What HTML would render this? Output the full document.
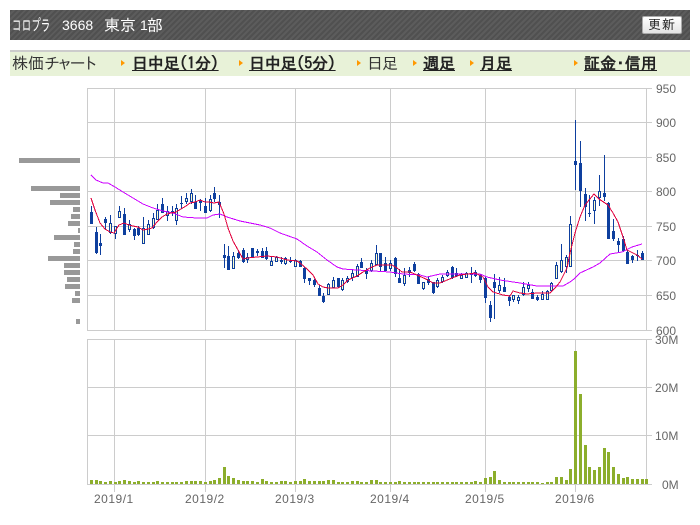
<!DOCTYPE html>
<html lang="ja">
<head>
<meta charset="utf-8">
<title>コロプラ 3668</title>
<style>
html,body{margin:0;padding:0;background:#fff;width:700px;height:525px;overflow:hidden}
body{position:relative;font-family:"Liberation Sans","IPAGothic","Noto Sans CJK JP",sans-serif;color:#333}
.abs{position:absolute;white-space:nowrap}
#hd{left:10px;top:10px;width:680px;height:30px;background:repeating-linear-gradient(135deg,#505050 0,#505050 2px,#5c5c5c 2px,#5c5c5c 4px)}
.w{position:absolute;color:#fff;white-space:nowrap;font-family:"IPAGothic","Liberation Sans",sans-serif;line-height:20px;top:15px}
#btn{left:642px;top:16px;width:38px;height:16px;border:1px solid #aaa;border-radius:2px;background:linear-gradient(#fff,#e4e4e4);color:#222;font-size:13px;line-height:16px;text-align:center;font-family:"IPAGothic",sans-serif;letter-spacing:1px}
#nav{left:10px;top:50px;width:680px;height:24px;border-top:2px solid #ccc;background:#e8f2d8}
.t{position:absolute;top:52px;line-height:22px;font-size:16px;font-family:"IPAGothic","Noto Sans CJK JP",sans-serif;color:#333;white-space:nowrap}
.b{font-weight:bold;text-decoration:underline;color:#222}
.ar{position:absolute;top:60px;width:0;height:0;border-left:4px solid #f90;border-top:3px solid transparent;border-bottom:3px solid transparent}
svg{position:absolute;left:0;top:0}
svg text{font-family:"Liberation Sans",sans-serif;font-size:12px;fill:#666}
</style>
</head>
<body>
<div class="abs" id="hd"></div>
<span class="w" style="left:12px;font-size:16px;transform:scaleX(.6);transform-origin:0 50%">コロプラ</span>
<span class="w" style="left:62px;font-size:14px;font-family:'Liberation Sans',sans-serif">3668</span>
<span class="w" style="left:104px;font-size:16px">東京</span>
<span class="w" style="left:140px;font-size:14px;font-family:'Liberation Sans',sans-serif">1</span>
<span class="w" style="left:147px;font-size:16px">部</span>
<div class="abs" id="btn">更新</div>
<div class="abs" id="nav"></div>
<span class="t" style="left:12px">株価</span><span class="t" style="left:44px;letter-spacing:-3.2px">チャート</span>
<i class="ar" style="left:121px"></i><span class="t b" style="left:132px;letter-spacing:-.2px">日中足(1分)</span>
<i class="ar" style="left:239px"></i><span class="t b" style="left:249px;letter-spacing:-.2px">日中足(5分)</span>
<i class="ar" style="left:357px"></i><span class="t" style="left:367px;letter-spacing:-1px">日足</span>
<i class="ar" style="left:413px"></i><span class="t b" style="left:423px">週足</span>
<i class="ar" style="left:470px"></i><span class="t b" style="left:480px">月足</span>
<i class="ar" style="left:574px"></i><span class="t b" style="left:584px;letter-spacing:.2px">証金･信用</span>
<svg id="c" width="700" height="525" viewBox="0 0 700 525" xmlns="http://www.w3.org/2000/svg">
<g id="g" shape-rendering="crispEdges"></g>
<g id="lp" fill="#999" shape-rendering="crispEdges"></g>
<g id="vol" fill="#8cae2c" shape-rendering="crispEdges"></g>
<g id="cd" shape-rendering="crispEdges"></g>
<polyline id="pk" fill="none" stroke="#cc00ff" stroke-width="1" shape-rendering="crispEdges"/>
<polyline id="rd" fill="none" stroke="#e0003c" stroke-width="1" shape-rendering="crispEdges"/>
<text x="656" y="93">950</text>
<text x="656" y="127">900</text>
<text x="656" y="162">850</text>
<text x="656" y="196">800</text>
<text x="656" y="231">750</text>
<text x="656" y="265">700</text>
<text x="656" y="300">650</text>
<text x="656" y="335">600</text>
<text x="655" y="344">30M</text>
<text x="655" y="392">20M</text>
<text x="655" y="440">10M</text>
<text x="662" y="489">0M</text>
<text x="94" y="503" letter-spacing=".5">2019/1</text>
<text x="185" y="503" letter-spacing=".5">2019/2</text>
<text x="275" y="503" letter-spacing=".5">2019/3</text>
<text x="370" y="503" letter-spacing=".5">2019/4</text>
<text x="465" y="503" letter-spacing=".5">2019/5</text>
<text x="555" y="503" letter-spacing=".5">2019/6</text>
</svg>
<script>
(function(){
var r=function(x,y,w,h,f){return '<rect x="'+x+'" y="'+y+'" width="'+w+'" height="'+h+'"'+(f?' fill="'+f+'"':'')+'/>'};
var G='#ccc',s='';
[88,122,157,191,226,260,295,330].forEach(function(y){s+=r(87,y,565,1,G)});
[339,387,435,484].forEach(function(y){s+=r(87,y,565,1,G)});
[87,114,205,295,390,485,575,646].forEach(function(x){s+=r(x,88,1,243,G);
 var long=(x!=87&&x!=646);s+=r(x,339,1,long?153:146,G)});
document.getElementById('g').innerHTML=s;
s='';
[[158,19],[186,31],[193,60],[200,50],[207,73],[214,71],[221,68],[228,78],[235,54],[242,74],[249,73],[256,48],[263,64],[270,64],[277,67],[284,65],[291,75],[298,72],[319,76]].forEach(function(a){s+=r(a[1],a[0],80-a[1],5)});
document.getElementById('lp').innerHTML=s;
var X=function(i){return Math.floor(91.3+i*4.748)};
var V=[4,4,3,2,3,2,3,4,3,2,3,2,2,2,3,2,2,2,2,2,3,3,3,3,2,3,4,6,17,8,6,4,3,3,3,2,5,3,2,2,3,3,2,3,3,5,3,3,3,3,4,4,2,2,2,3,3,2,2,4,4,
2,2,2,2,3,2,2,2,2,2,2,2,2,2,2,2,2,2,2,2,3,2,6,7,13,4,2,2,2,2,2,2,2,2,1,2,2,7,7,4,15,133,90,39,17,14,17,36,32,17,10,6,7,5,5,5,5];
s='';V.forEach(function(h,i){s+=r(X(i)-1,484-h,3,h)});
document.getElementById('vol').innerHTML=s;
var C=[[206,224,212,224,1],[227,254,232,253,1],[234,255,243,246,1],[217,230,219,223,1],[215,234,223,233,0],[226,239,226,234,0],[206,218,211,218,0],[208,235,214,235,1],[220,232,224,230,0],[228,240,229,236,1],[226,236,228,235,1],[217,244,228,244,0],[220,235,224,235,0],[213,229,218,228,0],[204,220,210,220,0],[198,213,204,213,1],[206,221,211,216,0],[206,216,211,213,1],[204,225,208,221,0],[196,209,203,204,1],[193,204,198,202,0],[189,204,193,202,0],[195,209,202,209,1],[199,211,200,203,1],[198,213,206,213,1],[195,212,199,211,0],[187,202,193,199,1],[195,218,202,205,1],
[244,268,255,258,1],[246,270,256,270,1],[252,269,256,269,0],[250,259,253,258,1],[248,263,250,262,1],[253,263,257,260,0],[248,258,248,257,1],[249,256,251,253,0],[248,258,251,258,1],[247,260,251,259,1],[256,266,261,266,0],[256,262,257,262,0],[257,264,260,262,1],[257,265,258,264,0],[257,263,261,262,1],[259,267,260,267,0],[260,267,261,267,1],[267,283,268,279,1],[278,285,278,281,1],[279,287,280,285,1],[285,296,288,296,1],[293,303,296,302,1],[283,295,284,295,0],[277,288,280,288,0],[278,288,278,287,1],[278,291,280,290,0],[276,283,278,282,0],[269,281,273,278,0],[264,277,266,277,0],[258,268,262,268,1],[268,279,271,274,1],[260,272,263,271,0],[245,265,253,265,0],[253,272,253,267,1],[257,272,263,271,1],[260,271,263,269,0],[257,277,258,274,1],[269,283,278,283,1],[268,286,275,284,0],[267,277,270,273,1],[262,272,264,271,1],[273,284,274,284,1],[282,290,282,289,0],[277,285,279,283,1],[282,294,282,293,1],[278,288,280,287,0],
[275,283,277,282,0],[270,277,272,276,0],[266,279,267,278,1],[268,277,273,276,1],[273,279,275,279,0],[272,278,273,278,0],[267,283,273,275,1],[270,277,272,276,1],[274,283,275,280,1],[277,303,278,298,1],[301,322,305,318,1],[274,319,282,288,1],[277,293,285,291,0],[278,292,287,292,1],[295,306,297,301,1],[295,302,295,300,0],[295,304,297,301,0],[282,296,287,295,0],[282,292,285,289,0],[289,299,292,299,1],[295,301,297,300,1],[291,300,294,300,0],[290,300,291,300,0],[282,291,283,291,0],
[262,279,265,279,0],[244,273,260,272,0],[255,273,257,267,0],[216,267,224,267,0],[120,190,161,165,1],[141,207,163,191,1],[188,221,194,207,1],[195,217,213,214,1],[197,224,200,211,0],[175,206,191,198,0],[155,201,193,197,1],[202,239,203,239,1],[219,241,231,239,1],[238,252,241,245,1],[236,252,239,251,1],[250,264,252,264,1],[255,263,256,260,1],[250,261,255,256,1],[251,260,253,260,1]];
var B='#0e3f9e';s='';
C.forEach(function(c,i){var x=X(i);
 s+=r(x,c[0],1,c[1]-c[0],B);
 var h=Math.max(c[3]-c[2],1);
 s+=r(x-1,c[2],3,h,B);
 if(!c[4]&&h>2)s+=r(x,c[2]+1,1,h-2,'#ffffc8');
});
document.getElementById('cd').innerHTML=s;
document.getElementById('rd').setAttribute('points','91,198 95,210 100,223 105,229 110,232 114,233 119,225 124,223 129,225 133,226 138,227 143,230 148,229 152,228 157,222 162,217 167,214 171,213 176,212 181,209 186,206 190,203 195,202 200,200 205,202 209,202 214,203 219,202 224,214 228,228 233,241 238,250 243,259 247,258 257,257 267,256 277,257 287,260 297,261 300,263 307,269 313,275 318,284 323,287 328,288 338,288 343,285 348,280 357,276 363,272 370,268 377,265 383,265 392,265 397,268 402,272 410,272 417,275 428,280 433,283 440,283 452,278 460,275 475,273 483,277 488,287 493,292 503,295 510,296 513,291 520,293 527,294 537,293 550,293 555,288 560,282 567,268 570,253 575,233 580,217 585,205 594,194 599,199 608,205 613,213 618,222 623,237 627,250 637,255 642,259');
document.getElementById('pk').setAttribute('points','91,175 96,180 103,183 108,183 115,187 123,192 133,198 143,204 153,208 163,211 173,213 183,217 197,218 207,218 213,215 220,214 227,217 240,221 260,225 270,228 280,233 297,239 307,246 317,252 327,260 337,267 343,269 357,270 373,271 390,272 403,274 420,275 427,277 440,274 460,274 480,274 487,277 500,280 520,283 537,286 553,286 563,286 570,282 574,279 580,273 593,267 600,263 610,254 622,252 632,247 642,244');
})();
</script>
</body>
</html>
